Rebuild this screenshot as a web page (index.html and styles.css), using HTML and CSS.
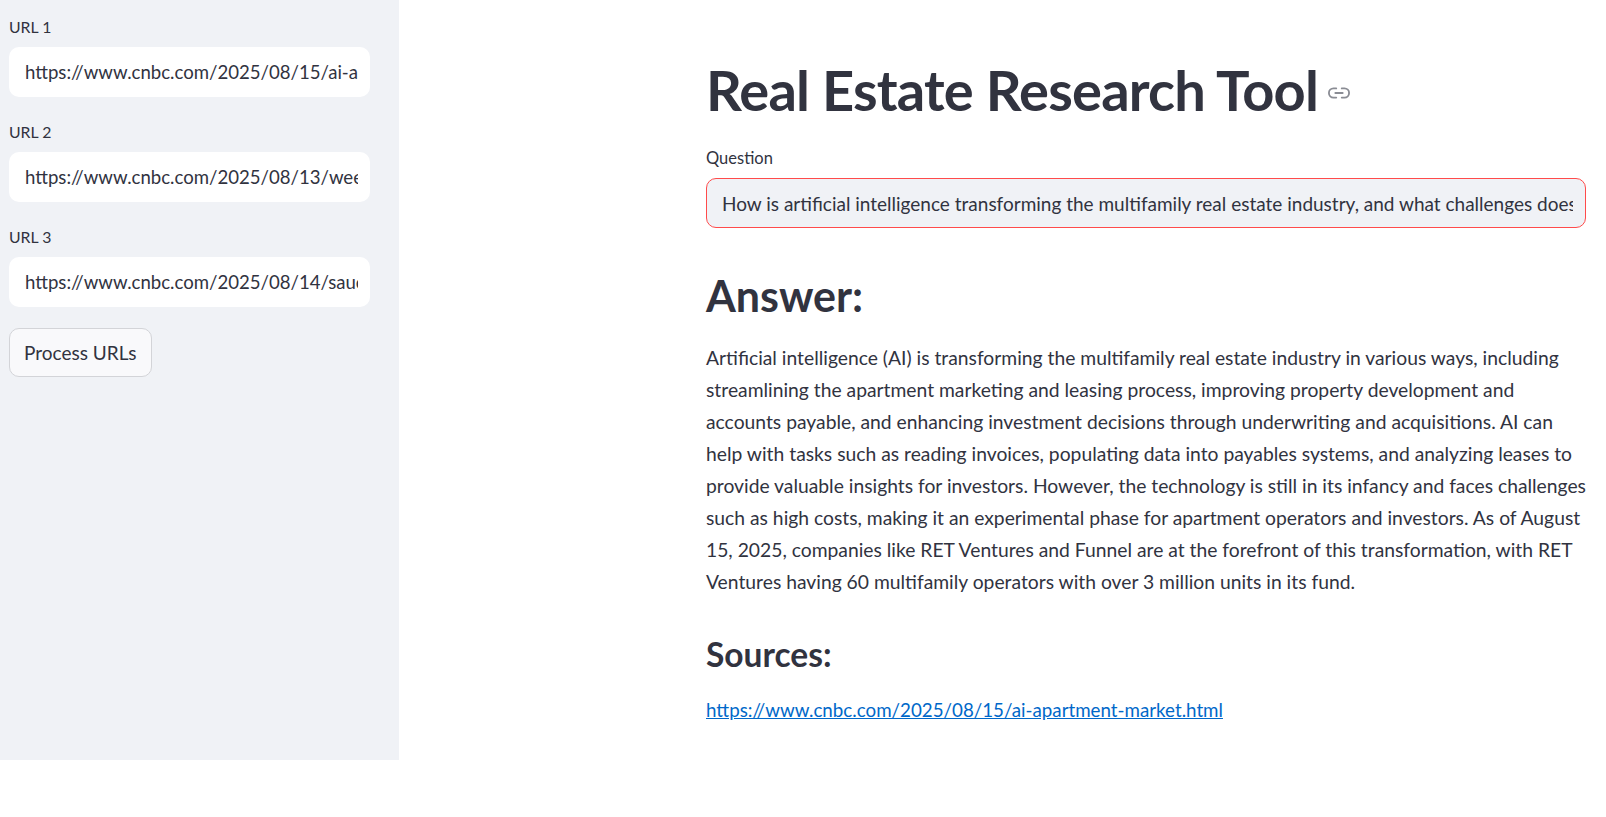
FILE: index.html
```html
<!DOCTYPE html>
<html lang="en">
<head>
<meta charset="utf-8">
<title>Real Estate Research Tool</title>
<link rel="stylesheet" href="styles.css">
</head>
<body>
<div class="app">
  <aside class="sidebar">
    <div class="field">
      <label class="field-label" for="u1">URL 1</label>
      <input class="field-input" id="u1" type="text" value="https://www.cnbc.com/2025/08/15/ai-apartment-market.html">
    </div>
    <div class="field">
      <label class="field-label" for="u2">URL 2</label>
      <input class="field-input" id="u2" type="text" value="https://www.cnbc.com/2025/08/13/weekly-mortgage-demand.html">
    </div>
    <div class="field">
      <label class="field-label" for="u3">URL 3</label>
      <input class="field-input" id="u3" type="text" value="https://www.cnbc.com/2025/08/14/saucy-real-estate.html">
    </div>
    <button class="btn" type="button">Process URLs</button>
  </aside>
  <main class="main">
    <div class="content">
      <h1 class="title">Real Estate Research Tool<span class="anchor"><svg width="22" height="22" viewBox="0 0 24 24" fill="none" stroke="currentColor" stroke-width="2" stroke-linecap="round" stroke-linejoin="round"><path d="M15 7h3a5 5 0 0 1 0 10h-3"/><path d="M9 17H6a5 5 0 0 1 0-10h3"/><line x1="8" y1="12" x2="16" y2="12"/></svg></span></h1>
      <label class="q-label" for="q">Question</label>
      <input class="q-input" id="q" type="text" value="How is artificial intelligence transforming the multifamily real estate industry, and what challenges does it face?">
      <h2 class="h2">Answer:</h2>
      <p class="answer">Artificial intelligence (AI) is transforming the multifamily real estate industry in various ways, including streamlining the apartment marketing and leasing process, improving property development and accounts payable, and enhancing investment decisions through underwriting and acquisitions. AI can help with tasks such as reading invoices, populating data into payables systems, and analyzing leases to provide valuable insights for investors. However, the technology is still in its infancy and faces challenges such as high costs, making it an experimental phase for apartment operators and investors. As of August 15, 2025, companies like RET Ventures and Funnel are at the forefront of this transformation, with RET Ventures having 60 multifamily operators with over 3 million units in its fund.</p>
      <h3 class="h3">Sources:</h3>
      <p class="source"><a href="#">https://www.cnbc.com/2025/08/15/ai-apartment-market.html</a></p>
    </div>
  </main>
</div>
</body>
</html>
```

FILE: styles.css
```css
* { box-sizing: border-box; }
html, body {
  margin: 0;
  padding: 0;
  background: #ffffff;
  color: #31333f;
  font-family: Lato, "Noto Sans", sans-serif;
}
.app {
  display: flex;
  align-items: flex-start;
}
.sidebar {
  width: 399px;
  height: 760px;
  flex: none;
  background: #f0f2f6;
  padding: 13px 29px 0 9px;
  display: flex;
  flex-direction: column;
  align-items: flex-start;
  gap: 21px;
}
.field {
  width: 100%;
  display: flex;
  flex-direction: column;
}
.field-label {
  padding-top: 3px;
  height: 25px;
  line-height: 22px;
  font-size: 15.8px;
  margin-bottom: 9px;
}
.field-input {
  width: 361px;
  height: 50px;
  border: none;
  border-radius: 10px;
  background: #ffffff;
  padding: 0 12px 0 16px;
  font-family: inherit;
  font-size: 18.6px;
  color: #31333f;
  outline: none;
}
.btn {
  height: 49px;
  padding: 0 14px;
  border: 1px solid #d3d4d8;
  border-radius: 10px;
  background: #f9f9fb;
  font-family: inherit;
  font-size: 19px;
  color: #31333f;
}
.main {
  flex: 1;
  padding-left: 307px;
}
.content {
  width: 880px;
  padding-top: 56px;
}
.title {
  margin: 0;
  font-size: 56px;
  line-height: 68px;
  font-weight: 700;
  letter-spacing: -0.8px;
  display: flex;
  align-items: center;
}
.anchor {
  display: inline-flex;
  color: #8a8c94;
  margin-left: 10px;
  margin-top: 6px;
}
.q-label {
  display: block;
  margin-top: 23px;
  font-size: 16.5px;
  line-height: 22px;
  margin-bottom: 9px;
}
.q-input {
  display: block;
  width: 880px;
  height: 50px;
  border: 1px solid #ff4b4b;
  border-radius: 10px;
  background: #f0f2f6;
  padding: 0 12px 0 15px;
  font-family: inherit;
  font-size: 19px;
  color: #31333f;
  outline: none;
}
.h2 {
  margin: 40px 0 0;
  font-size: 43px;
  line-height: 56px;
  font-weight: 700;
}
.answer {
  margin: 18px 0 0;
  font-size: 19.3px;
  line-height: 32px;
}
.h3 {
  margin: 34px 0 0;
  font-size: 33.5px;
  line-height: 44px;
  font-weight: 700;
}
.source {
  margin: 18px 0 0;
  font-size: 18.75px;
  line-height: 32px;
}
.source a {
  color: #0068c9;
}
```
